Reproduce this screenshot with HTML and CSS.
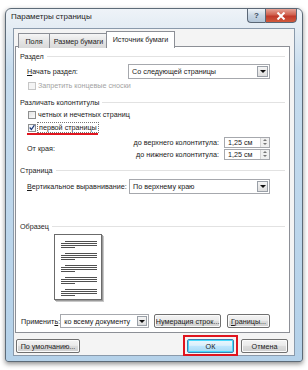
FILE: index.html
```html
<!DOCTYPE html>
<html lang="ru">
<head>
<meta charset="utf-8">
<title>Параметры страницы</title>
<link rel="stylesheet" href="styles.css">
</head>
<body>
<div class="window">
  <div class="titlebar">
    <span class="title">Параметры страницы</span>
  </div>
  <div class="caption-btns">
    <div class="cap help">?</div>
    <div class="cap close"><svg width="10" height="8" viewBox="0 0 10 8"><path d="M1.5 0.5 L8.5 7.5 M8.5 0.5 L1.5 7.5" stroke="#fff" stroke-width="2"/></svg></div>
  </div>
  <div class="client">
    <div class="tabs">
      <div class="tab t1">Поля</div>
      <div class="tab t2">Размер бумаги</div>
      <div class="tab active">Источник бумаги</div>
    </div>
    <div class="panel">
      <div class="group g1">Раздел</div>
      <div class="row r-start">
        <span class="label lw"><u>Н</u>ачать раздел:</span>
        <div class="combo"><span class="combo-text">Со следующей страницы</span><span class="drop"><i></i></span></div>
      </div>
      <div class="row chk-row disabled">
        <span class="box"></span><span>Запретить концевые сноски</span>
      </div>
      <div class="group g2">Различать колонтитулы</div>
      <div class="row chk-row c1">
        <span class="box"></span><span>четных и нечетных страниц</span>
      </div>
      <div class="row chk-row c2">
        <span class="box checked"><svg width="7" height="7" viewBox="0 0 7 7"><path d="M0.8 3.5 L2.8 5.8 L6.3 0.8" fill="none" stroke="#1c3a7a" stroke-width="1.4"/></svg></span><span class="focus">первой страницы</span>
        <span class="redline"></span>
      </div>
      <div class="edge">
        <span class="label edge-label">От края:</span>
        <div class="spins">
          <div class="spin-row">
            <span>до верхнего колонтитула:</span>
            <div class="spin"><span>1,25 см</span><span class="arrows"><i class="up"></i><i class="down"></i></span></div>
          </div>
          <div class="spin-row">
            <span>до нижнего колонтитула:</span>
            <div class="spin"><span>1,25 см</span><span class="arrows"><i class="up"></i><i class="down"></i></span></div>
          </div>
        </div>
      </div>
      <div class="group g3">Страница</div>
      <div class="row r-vert">
        <span class="label lw2"><u>В</u>ертикальное выравнивание:</span>
        <div class="combo"><span class="combo-text">По верхнему краю</span><span class="drop"><i></i></span></div>
      </div>
      <div class="group g4">Образец</div>
      <div class="preview">
        <div class="page">
          <svg width="46" height="64" viewBox="0 0 46 64">
            <g stroke="#505050" stroke-width="1">
              <path d="M10 6.5H42M6 8.5H42M6 10.5H42M6 12.5H20"/>
              <path d="M10 18.5H42M6 20.5H42M6 22.5H42M6 24.5H20"/>
              <path d="M10 30.5H42M6 32.5H42M6 34.5H42M6 36.5H20"/>
              <path d="M10 42.5H42M6 44.5H42M6 46.5H42M6 48.5H20"/>
              <path d="M10 54.5H42M6 56.5H42M6 58.5H42M6 60.5H20"/>
            </g>
          </svg>
        </div>
      </div>
      <div class="row r-apply">
        <span class="apply-label">Применит<u>ь</u>:</span>
        <div class="combo small"><span class="combo-text">ко всему документу</span><span class="drop"><i></i></span></div>
        <button class="btn b-num">Нумерация строк...</button>
        <button class="btn b-bord"><u>Г</u>раницы...</button>
      </div>
    </div>
    <div class="footer">
      <button class="btn b-def">По умолчанию...</button>
      <span class="spacer"></span>
      <button class="btn b-ok">ОК<span class="mark"></span></button>
      <button class="btn b-cancel">Отмена</button>
    </div>
  </div>
</div>
</body>
</html>
```

FILE: styles.css
```css
* { box-sizing: border-box; }
html, body {
  margin: 0;
  padding: 0;
  width: 308px;
  height: 370px;
  overflow: hidden;
  background: #ffffff;
  font-family: "Liberation Sans", Arial, sans-serif;
  font-size: 7.2px;
  color: #1a1a1a;
}
u { text-decoration: underline; text-underline-offset: 1px; }

.window {
  position: relative;
  margin: 8px 0 0 5px;
  width: 298px;
  height: 354px;
  border: 1px solid #5d6b78;
  border-radius: 6px 6px 3px 3px;
  background: linear-gradient(180deg, #eef3f8 0, #e2ebf3 22px, #c6dcee 60px, #b4d1e9 100%);
  box-shadow: 0 2px 5px rgba(0, 0, 0, 0.45);
  display: flex;
  flex-direction: column;
  padding: 0 7px 5px 7px;
}
.titlebar {
  height: 19px;
  display: flex;
  align-items: flex-start;
}
.title {
  margin-left: -2px;
  line-height: 16px;
  font-size: 8px;
  color: #1e1e1e;
}
.caption-btns {
  position: absolute;
  top: -1px;
  right: 5px;
  display: flex;
}
.cap {
  height: 15px;
  border: 1px solid #5a6776;
  display: flex;
  align-items: center;
  justify-content: center;
}
.help {
  width: 18px;
  border-radius: 0 0 0 4px;
  border-right: none;
  background: linear-gradient(180deg, #eef3f8, #c8d6e4 50%, #b3c6d8);
  color: #394a5c;
  font-weight: bold;
  font-size: 8px;
}
.close {
  width: 32px;
  border-radius: 0 0 4px 0;
  background: linear-gradient(180deg, #e7a497 0, #d0614e 45%, #c0392b 55%, #d05a3c 100%);
}

.client {
  flex: 1;
  background: #f4f4f4;
  border: 1px solid #8a9aab;
  display: flex;
  flex-direction: column;
  padding: 2px 4px 0 1px;
}
.tabs {
  display: flex;
  height: 16px;
  padding-left: 3px;
  position: relative;
  z-index: 2;
  margin-bottom: -1px;
}
.tab {
  margin-top: 2px;
  height: 15px;
  border: 1px solid #8c8f96;
  border-bottom: none;
  border-right: none;
  background: linear-gradient(180deg, #f6f6f6, #e5e5e5 50%, #d9d9d9);
  display: flex;
  align-items: center;
  justify-content: center;
  color: #222;
  white-space: nowrap;
}
.t1 { width: 31px; }
.t2 { width: 58px; }
.tab.active {
  margin-top: 0;
  height: 17px;
  width: 69px;
  border-right: 1px solid #8c8f96;
  background: #fff;
  margin-left: -1px;
  padding-bottom: 2px;
}
.panel {
  height: 287px;
  background: #fff;
  border: 1px solid #8c8f96;
  display: flex;
  flex-direction: column;
  padding: 3px 19px 0 4px;
  position: relative;
}

.group {
  height: 12px;
  display: flex;
  align-items: center;
  color: #1e1e1e;
}
.group::after {
  content: "";
  flex: 1;
  height: 1px;
  margin-left: 3px;
  margin-right: -15px;
  background: #e2e2e2;
}
.g2 { margin-top: 4px; }
.g3 { margin-top: 4px; }
.g4 { margin-top: 26px; }

.row {
  display: flex;
  align-items: center;
  padding-left: 7px;
}
.label { white-space: nowrap; }
.lw { width: 101px; }
.lw2 { width: 102px; }
.r-start { height: 16px; margin-top: 1px; }
.r-vert { height: 15px; margin-top: 3px; }

.combo {
  flex: 1;
  height: 15px;
  border: 1px solid #a6a8ad;
  display: flex;
  align-items: center;
  padding-left: 3px;
  background: #fff;
}
.combo-text { flex: 1; white-space: nowrap; }
.drop {
  width: 11px;
  height: 11px;
  margin-right: 1px;
  border: 1px solid #9aa0a8;
  background: linear-gradient(180deg, #f5f5f5, #dedede);
  display: flex;
  align-items: center;
  justify-content: center;
}
.drop i {
  width: 0;
  height: 0;
  border-left: 3px solid transparent;
  border-right: 3px solid transparent;
  border-top: 3px solid #111;
}

.chk-row {
  height: 13px;
  padding-left: 8px;
  position: relative;
}
.box {
  width: 8px;
  height: 8px;
  border: 1px solid #8e8f8f;
  background: linear-gradient(135deg, #e4e4e4, #fafafa);
  margin-right: 2px;
  display: flex;
  align-items: center;
  justify-content: center;
}
.disabled { color: #a3a3a3; }
.disabled .box { border-color: #c6c6c6; background: #f4f4f4; }
.box.checked { background: #f2f5fa; }
.focus {
  outline: 1px dotted #777;
  outline-offset: 0;
  padding: 0 1px;
  line-height: 9px;
}
.redline {
  position: absolute;
  left: 7px;
  top: 12px;
  width: 71px;
  height: 2px;
  background: #e0151f;
}
.c2 { margin-bottom: 2px; }

.edge {
  display: flex;
  align-items: center;
  padding-left: 7px;
  height: 24px;
}
.edge-label { flex: 1; }
.spins { display: flex; flex-direction: column; }
.spin-row {
  height: 12px;
  display: flex;
  align-items: center;
  justify-content: flex-end;
  white-space: nowrap;
}
.spin {
  margin-left: 5px;
  width: 46px;
  height: 11px;
  border: 1px solid #a6a8ad;
  display: flex;
  align-items: center;
  padding-left: 3px;
}
.spin span:first-child { flex: 1; }
.arrows {
  width: 9px;
  height: 9px;
  display: flex;
  flex-direction: column;
  align-items: center;
  justify-content: space-around;
  background: #f0f0f0;
  border-left: 1px solid #d4d4d4;
}
.arrows i {
  width: 0;
  height: 0;
  border-left: 2px solid transparent;
  border-right: 2px solid transparent;
}
.arrows .up { border-bottom: 2px solid #777; }
.arrows .down { border-top: 2px solid #777; }

.preview {
  height: 82px;
  padding-left: 34px;
  padding-top: 2px;
}
.page {
  width: 48px;
  height: 66px;
  border: 1px solid #6b6b6b;
  background: #fff;
  box-shadow: 1px 1px 0 #9a9a9a, 2px 2px 0 #c8c8c8;
}
.page svg { display: block; }

.r-apply {
  padding-left: 1px;
  height: 14px;
}
.apply-label { width: 43px; white-space: nowrap; }
.combo.small {
  flex: none;
  width: 89px;
  height: 14px;
}
.combo.small .drop { width: 10px; height: 10px; }

.btn {
  font: inherit;
  color: #1a1a1a;
  height: 14px;
  padding: 0;
  white-space: nowrap;
  border: 1px solid #707070;
  border-radius: 2px;
  background: linear-gradient(180deg, #f3f3f3 0, #ebebeb 45%, #dddddd 50%, #cfcfcf 100%);
  box-shadow: inset 0 0 0 1px #fbfbfb;
  display: flex;
  align-items: center;
  justify-content: center;
  position: relative;
}
.b-num { width: 75px; margin-left: 5px; }
.b-bord { width: 48px; margin-left: 6px; }

.footer {
  display: flex;
  align-items: center;
  padding-top: 6px;
  padding-left: 1px;
}
.spacer { flex: 1; }
.b-def { width: 64px; }
.b-ok {
  width: 47px;
  border-color: #3c7fb1;
  box-shadow: inset 0 0 0 1px #48d8fb;
  background: linear-gradient(180deg, #eaf6fd 0, #d9f0fc 45%, #bee6fd 50%, #a7d9f5 100%);
}
.b-ok .mark {
  position: absolute;
  left: -5px;
  right: -5px;
  top: -5px;
  bottom: -4px;
  border: 2px solid #e0141e;
}
.b-cancel { width: 47px; margin-left: 7px; margin-right: 2px; }
```
